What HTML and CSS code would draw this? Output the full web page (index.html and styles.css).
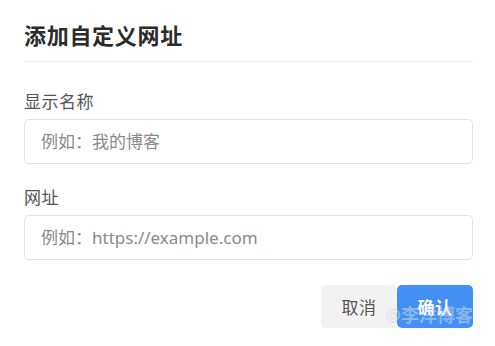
FILE: index.html
```html
<!DOCTYPE html>
<html lang="zh">
<head>
<meta charset="utf-8">
<link rel="stylesheet" href="styles.css">
</head>
<body>
<div class="dialog">
  <div class="header"><h2 class="title">添加自定义网址</h2></div>
  <div class="field field-first">
    <label class="label">显示名称</label>
    <input class="input" placeholder="例如：我的博客">
  </div>
  <div class="field">
    <label class="label">网址</label>
    <input class="input" placeholder="例如：https://example.com">
  </div>
  <div class="actions">
    <button class="btn btn-cancel">取消</button>
    <button class="btn btn-ok">确认</button>
    <span class="watermark">@李洋博客</span>
  </div>
</div>
</body>
</html>
```
FILE: styles.css
```css
html, body { margin: 0; padding: 0; background: #fff; }
body { font-family: "Noto Sans", "Noto Sans CJK SC", sans-serif; }
.dialog { padding: 0 22px 0 24px; }
.header { padding-top: 20px; padding-bottom: 11px; border-bottom: 1px solid #eeeeee; }
.title { margin: 0; font-size: 22px; line-height: 30px; font-weight: 700; color: #2b2b2b; letter-spacing: 0.7px; }
.field { display: flex; flex-direction: column; }
.label { font-size: 17px; line-height: 24px; color: #555; margin-top: 22px; margin-bottom: 5px; letter-spacing: 0.5px; }
.field-first .label { margin-top: 28px; }
.input { height: 45px; box-sizing: border-box; border: 1px solid #e3e3e3; border-radius: 5px; padding: 0 16px; font-family: "Noto Sans", "Noto Sans CJK SC", sans-serif; font-size: 17px; color: #333; outline: none; }
.input::placeholder { color: #8a8a8a; }
.actions { position: relative; display: flex; justify-content: flex-end; margin-top: 25px; }
.btn { width: 76px; height: 43px; border: none; border-radius: 5px; font-family: "Noto Sans", "Noto Sans CJK SC", sans-serif; font-size: 17px; cursor: pointer; letter-spacing: 0.5px; }
.btn-cancel { background: #f2f2f2; color: #555; }
.btn-ok { background: #4390f5; color: #fff; font-weight: 700; }
.watermark { position: absolute; right: 0; bottom: 1px; font-size: 18px; font-weight: 700; color: rgba(210, 220, 235, 0.5); pointer-events: none; }
```
